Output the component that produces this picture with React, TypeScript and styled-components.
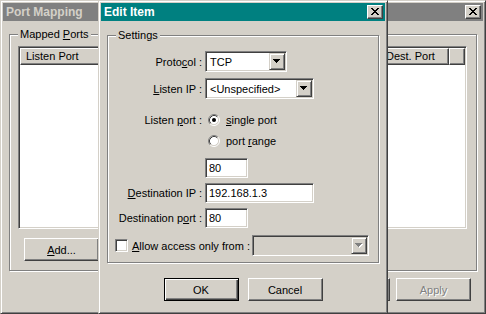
import styled, { createGlobalStyle } from "styled-components";

const GlobalStyle = createGlobalStyle`
  html, body {
    margin: 0;
    padding: 0;
  }
  body {
    width: 486px;
    height: 314px;
    overflow: hidden;
    background: #d4d0c8;
    font-family: "Liberation Sans", Arial, sans-serif;
    font-size: 11px;
    color: #000;
  }
`;

const Desktop = styled.div`
  position: relative;
  width: 486px;
  height: 314px;
  overflow: hidden;
  background: #d4d0c8;
`;

const Window = styled.div<{ $left: number; $width: number }>`
  position: absolute;
  top: 0;
  left: ${(p) => p.$left}px;
  width: ${(p) => p.$width}px;
  height: 314px;
  box-sizing: border-box;
  background: #d4d0c8;
  border: 1px solid;
  border-color: #d4d0c8 #404040 #404040 #d4d0c8;
  box-shadow: inset 1px 1px #fff, inset -1px -1px #808080;
  padding: 2px;
  display: flex;
  flex-direction: column;
`;

const TitleBar = styled.div<{ $active?: boolean }>`
  height: 18px;
  flex-shrink: 0;
  display: flex;
  align-items: center;
  padding: 0 2px 0 3px;
  background: ${(p) => (p.$active ? "#008080" : "#808080")};
  color: ${(p) => (p.$active ? "#fff" : "#d4d0c8")};
`;

const TitleText = styled.span`
  font-size: 12px;
  font-weight: bold;
  line-height: 14px;
`;

const CloseBtn = styled.div`
  margin-left: auto;
  width: 16px;
  height: 14px;
  box-sizing: border-box;
  background: #d4d0c8;
  border: 1px solid;
  border-color: #fff #404040 #404040 #fff;
  box-shadow: inset -1px -1px #808080;
  display: flex;
  align-items: flex-start;
  padding: 2px 0 0 3px;
`;

const Body = styled.div<{ $top: number }>`
  flex: 1;
  display: flex;
  flex-direction: column;
  padding: ${(p) => p.$top}px 6px 0 6px;
`;

const GroupFrame = styled.div<{ $pad: string }>`
  position: relative;
  border: 1px solid #808080;
  box-shadow: inset 1px 1px #fff, 1px 1px #fff;
  padding: ${(p) => p.$pad};
  display: flex;
  flex-direction: column;
`;

const GroupLabel = styled.span`
  position: absolute;
  top: -7px;
  left: 8px;
  padding: 0 2px;
  background: #d4d0c8;
  line-height: 13px;
  white-space: nowrap;
`;

const ListView = styled.div`
  height: 183px;
  box-sizing: border-box;
  background: #fff;
  border: 1px solid;
  border-color: #808080 #fff #fff #808080;
  box-shadow: inset 1px 1px #404040, inset -1px -1px #d4d0c8;
  padding: 1px;
`;

const ListHeader = styled.div`
  display: flex;
  height: 17px;
`;

const HeaderCell = styled.div<{ $width?: number }>`
  ${(p) => (p.$width ? `width: ${p.$width}px;` : "flex: 1;")}
  box-sizing: border-box;
  background: #d4d0c8;
  border: 1px solid;
  border-color: #fff #404040 #404040 #fff;
  box-shadow: inset -1px -1px #808080;
  padding-left: 5px;
  line-height: 15px;
  white-space: nowrap;
  overflow: hidden;
`;

const Button = styled.div<{ $default?: boolean; $disabled?: boolean }>`
  width: 75px;
  height: 23px;
  box-sizing: border-box;
  background: #d4d0c8;
  display: flex;
  align-items: center;
  justify-content: center;
  border: 1px solid;
  border-color: ${(p) => (p.$default ? "#000" : "#fff #404040 #404040 #fff")};
  box-shadow: ${(p) =>
    p.$default
      ? "inset 1px 1px #fff, inset -1px -1px #404040, inset -2px -2px #808080"
      : "inset -1px -1px #808080"};
  color: ${(p) => (p.$disabled ? "#808080" : "#000")};
  text-shadow: ${(p) => (p.$disabled ? "1px 1px #fff" : "none")};
`;

const ButtonRow = styled.div<{ $top: number; $justify: string; $gap: number; $right?: number }>`
  display: flex;
  justify-content: ${(p) => p.$justify};
  gap: ${(p) => p.$gap}px;
  margin-top: ${(p) => p.$top}px;
  margin-right: ${(p) => p.$right ?? 0}px;
`;

const AddRow = styled.div`
  margin-top: 9px;
  padding-left: 6px;
`;

const FormRow = styled.div<{ $top: number; $height: number }>`
  display: grid;
  grid-template-columns: 93px auto;
  column-gap: 3px;
  align-items: center;
  justify-content: start;
  height: ${(p) => p.$height}px;
  margin-top: ${(p) => p.$top}px;
`;

const Label = styled.span`
  text-align: right;
  white-space: nowrap;
`;

const Key = styled.span`
  text-decoration: underline;
`;

const Combo = styled.div<{ $width: number; $disabled?: boolean }>`
  width: ${(p) => p.$width}px;
  height: 21px;
  box-sizing: border-box;
  border: 1px solid;
  border-color: #808080 #fff #fff #808080;
  box-shadow: inset 1px 1px #404040, inset -1px -1px #d4d0c8;
  padding: 1px;
  background: ${(p) => (p.$disabled ? "#d4d0c8" : "#fff")};
  display: flex;
  align-items: center;
`;

const ComboText = styled.span`
  padding-left: 3px;
  white-space: nowrap;
`;

const DropBtn = styled.div`
  margin-left: auto;
  width: 16px;
  height: 17px;
  box-sizing: border-box;
  background: #d4d0c8;
  border: 1px solid;
  border-color: #d4d0c8 #404040 #404040 #d4d0c8;
  box-shadow: inset 1px 1px #fff, inset -1px -1px #808080;
  display: flex;
  align-items: flex-start;
  padding: 5px 0 0 3px;
`;

const Edit = styled.div<{ $width: number }>`
  width: ${(p) => p.$width}px;
  height: 20px;
  box-sizing: border-box;
  border: 1px solid;
  border-color: #808080 #fff #fff #808080;
  box-shadow: inset 1px 1px #404040, inset -1px -1px #d4d0c8;
  background: #fff;
  padding-left: 3px;
  display: flex;
  align-items: center;
  white-space: nowrap;
`;

const Option = styled.div`
  display: flex;
  align-items: center;
  gap: 6px;
  padding-left: 3px;
  white-space: nowrap;
`;

const CheckRow = styled.div`
  display: flex;
  align-items: center;
  height: 21px;
  margin-top: 7px;
  padding-left: 6px;
`;

const CheckBox = styled.div`
  width: 13px;
  height: 13px;
  box-sizing: border-box;
  border: 1px solid;
  border-color: #808080 #fff #fff #808080;
  box-shadow: inset 1px 1px #404040, inset -1px -1px #d4d0c8;
  background: #fff;
  margin-right: 4px;
`;

const CheckText = styled.span`
  white-space: nowrap;
`;

const Glyph = styled.svg`
  display: block;
  shape-rendering: crispEdges;
`;

const CloseX = () => (
  <CloseBtn>
    <Glyph width="8" height="7" viewBox="0 0 8 7">
      <path
        d="M0 0h2v1h-2z M6 0h2v1h-2z M1 1h2v1h-2z M5 1h2v1h-2z M2 2h4v1h-4z M3 3h2v1h-2z M2 4h4v1h-4z M1 5h2v1h-2z M5 5h2v1h-2z M0 6h2v1h-2z M6 6h2v1h-2z"
        fill="#000"
      />
    </Glyph>
  </CloseBtn>
);

const Arrow = ({ disabled }: { disabled?: boolean }) => (
  <Glyph width="8" height="5" viewBox="0 0 8 5">
    {disabled && <path d="M1 1h7v1h-7z M2 2h5v1h-5z M3 3h3v1h-3z M4 4h1v1h-1z" fill="#fff" />}
    <path
      d="M0 0h7v1h-7z M1 1h5v1h-5z M2 2h3v1h-3z M3 3h1v1h-1z"
      fill={disabled ? "#808080" : "#000"}
    />
  </Glyph>
);

const Radio = ({ checked }: { checked?: boolean }) => (
  <svg width="12" height="12" viewBox="0 0 12 12" style={{ display: "block" }}>
    <circle cx="6" cy="6" r="4.5" fill="#fff" />
    <path d="M2.11 9.89A5.5 5.5 0 0 1 9.89 2.11" fill="none" stroke="#808080" />
    <path d="M9.89 2.11A5.5 5.5 0 0 1 2.11 9.89" fill="none" stroke="#fff" />
    <path d="M2.82 9.18A4.5 4.5 0 0 1 9.18 2.82" fill="none" stroke="#404040" />
    <path d="M9.18 2.82A4.5 4.5 0 0 1 2.82 9.18" fill="none" stroke="#d4d0c8" />
    {checked && <circle cx="6" cy="6" r="2" fill="#000" />}
  </svg>
);

function PortMappingWindow() {
  // columns and buttons hidden behind the dialog keep their frames only
  return (
    <Window $left={0} $width={486}>
      <TitleBar>
        <TitleText>Port Mapping</TitleText>
        <CloseX />
      </TitleBar>
      <Body $top={13}>
        <GroupFrame $pad="11px 9px 9px 8px">
          <GroupLabel>
            Mapped <Key>P</Key>orts
          </GroupLabel>
          <ListView>
            <ListHeader>
              <HeaderCell $width={120}>Listen Port</HeaderCell>
              <HeaderCell $width={120} />
              <HeaderCell $width={120} />
              <HeaderCell $width={69}>Dest. Port</HeaderCell>
              <HeaderCell />
            </ListHeader>
          </ListView>
          <AddRow>
            <Button>
              <span>
                <Key>A</Key>dd...
              </span>
            </Button>
          </AddRow>
        </GroupFrame>
        <ButtonRow $top={7} $justify="flex-end" $gap={6} $right={6}>
          <Button />
          <Button />
          <Button $disabled>Apply</Button>
        </ButtonRow>
      </Body>
    </Window>
  );
}

function EditItemDialog() {
  return (
    <Window $left={98} $width={290}>
      <TitleBar $active>
        <TitleText>Edit Item</TitleText>
        <CloseX />
      </TitleBar>
      <Body $top={14}>
        <GroupFrame $pad="15px 9px 6px 1px">
          <GroupLabel>Settings</GroupLabel>
          <FormRow $top={0} $height={21}>
            <Label>
              Proto<Key>c</Key>ol :
            </Label>
            <Combo $width={82}>
              <ComboText>TCP</ComboText>
              <DropBtn>
                <Arrow />
              </DropBtn>
            </Combo>
          </FormRow>
          <FormRow $top={6} $height={21}>
            <Label>
              <Key>L</Key>isten IP :
            </Label>
            <Combo $width={109}>
              <ComboText>&lt;Unspecified&gt;</ComboText>
              <DropBtn>
                <Arrow />
              </DropBtn>
            </Combo>
          </FormRow>
          <FormRow $top={13} $height={16}>
            <Label>
              Listen <Key>p</Key>ort :
            </Label>
            <Option>
              <Radio checked />
              <span>
                <Key>s</Key>ingle port
              </span>
            </Option>
          </FormRow>
          <FormRow $top={5} $height={16}>
            <span />
            <Option>
              <Radio />
              <span>
                port <Key>r</Key>ange
              </span>
            </Option>
          </FormRow>
          <FormRow $top={9} $height={20}>
            <span />
            <Edit $width={43}>80</Edit>
          </FormRow>
          <FormRow $top={5} $height={20}>
            <Label>
              <Key>D</Key>estination IP :
            </Label>
            <Edit $width={109}>192.168.1.3</Edit>
          </FormRow>
          <FormRow $top={5} $height={20}>
            <Label>
              Destination p<Key>o</Key>rt :
            </Label>
            <Edit $width={43}>80</Edit>
          </FormRow>
          <CheckRow>
            <CheckBox />
            <CheckText>
              <Key>A</Key>llow access only from :
            </CheckText>
            <Combo $width={117} $disabled style={{ marginLeft: "auto" }}>
              <DropBtn>
                <Arrow disabled />
              </DropBtn>
            </Combo>
          </CheckRow>
        </GroupFrame>
        <ButtonRow $top={15} $justify="center" $gap={9}>
          <Button $default>OK</Button>
          <Button>Cancel</Button>
        </ButtonRow>
      </Body>
    </Window>
  );
}

export default function App() {
  return (
    <>
      <GlobalStyle />
      <Desktop>
        <PortMappingWindow />
        <EditItemDialog />
      </Desktop>
    </>
  );
}
